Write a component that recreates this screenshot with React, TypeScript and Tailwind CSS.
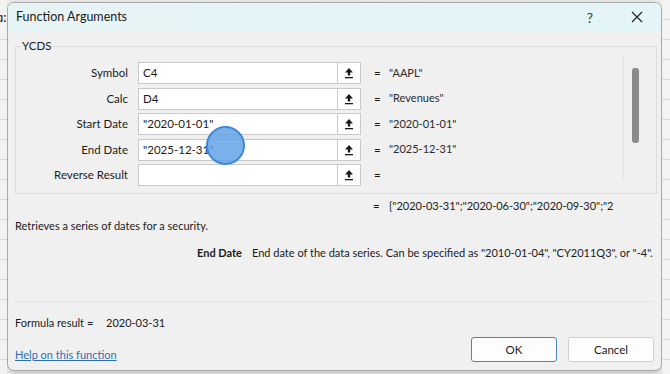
import React from 'react';

const rows = [
  { label: 'Symbol', input: 'C4', value: '"AAPL"' },
  { label: 'Calc', input: 'D4', value: '"Revenues"' },
  { label: 'Start Date', input: '"2020-01-01"', value: '"2020-01-01"' },
  { label: 'End Date', input: '"2025-12-31"', value: '"2025-12-31"' },
  { label: 'Reverse Result', input: '', value: '' },
];

function CollapseIcon() {
  return (
    <svg width="12" height="12" viewBox="0 0 12 12">
      <path d="M6 1 L10 5.5 L7.2 5.5 L7.2 8.5 L4.8 8.5 L4.8 5.5 L2 5.5 Z" fill="#1a1a1a" />
      <rect x="2" y="10" width="8" height="1.3" fill="#1a1a1a" />
    </svg>
  );
}

function SheetStrip({ className }: { className?: string }) {
  return (
    <div className={`flex flex-col bg-[#f3f3f3] ${className ?? ''}`}>
      {Array.from({ length: 19 }).map((_, i) => (
        <div key={i} className="h-[20px] shrink-0 border-b border-[#d8d8d8]" />
      ))}
    </div>
  );
}

export default function App() {
  return (
    <div className="relative flex h-[374px] w-[670px] overflow-hidden bg-[#f3f3f3] font-['Lato',sans-serif] text-[11px] text-[#1b1b1b]">
      <div className="relative w-[7px] shrink-0 overflow-hidden">
        <SheetStrip className="w-full" />
        <span className="absolute left-[-4px] top-[8px] text-[13px] text-[#222]">ɑ:</span>
      </div>

      <div className="mt-[2px] flex h-[369px] w-[655px] shrink-0 flex-col overflow-hidden rounded-[7px] border border-[#a9a9a9] bg-[#f0f0f0] shadow-[0_2px_8px_rgba(0,0,0,0.25)]">
        {/* title bar */}
        <div className="flex h-[28px] shrink-0 items-center bg-[linear-gradient(90deg,#e7f4f6,#e3f5f8)] pl-[8px] pr-[8px]">
          <span className="flex-1 text-[12.5px]">Function Arguments</span>
          <span className="mr-[38px] text-[14px] text-[#333]">?</span>
          <svg width="12" height="12" viewBox="0 0 12 12" className="mr-[10px]">
            <path d="M1 1 L11 11 M11 1 L1 11" stroke="#222" strokeWidth="1.2" />
          </svg>
        </div>

        <div className="flex flex-1 flex-col px-[7px] whitespace-nowrap">
          {/* group box */}
          <fieldset className="mt-[8px] h-[155px] shrink-0 border border-[#dcdcdc] pl-0 pr-0">
            <legend className="ml-[5px] px-[1px] text-[11.5px] leading-[14px]">YCDS</legend>
            <div className="flex">
              <div className="flex w-[345px] flex-col gap-[3.5px] pt-[9px]">
                {rows.map((r) => (
                  <div key={r.label} className="flex h-[22px] items-center text-[11.5px]">
                    <div className="w-[112px] pr-0 text-right">{r.label}</div>
                    <div className="ml-[10px] flex h-[22px] w-[200px] items-center border border-[#c9c9c9] bg-white pl-[4px]">
                      {r.input}
                    </div>
                    <div className="flex h-[22px] w-[23px] items-center justify-center border border-l-0 border-[#c9c9c9] bg-white">
                      <CollapseIcon />
                    </div>
                  </div>
                ))}
              </div>
              <div className="flex w-[262px] flex-col gap-[3.5px] pt-[9px]">
                {rows.map((r) => (
                  <div key={r.label} className="flex h-[22px] items-center">
                    <span className="ml-[13px] w-[15px] text-[11.5px]">=</span>
                    <span className="text-[#2b2b2b]">{r.value}</span>
                  </div>
                ))}
              </div>
              <div className="mt-[3px] h-[125px] w-[33px] border-l border-[#e2e2e2] pl-[8px] pt-[12px]">
                <div className="h-[75px] w-[7px] rounded-[3px] bg-[#8a8a8a]" />
              </div>
            </div>
          </fieldset>

          <div className="mt-[4px] flex h-[16px] shrink-0 items-center">
            <span className="ml-[358px] w-[16px] text-[11.5px]">=</span>
            <span className="w-[224px] overflow-hidden">{'{"2020-03-31";"2020-06-30";"2020-09-30";"2020-12-31"}'}</span>
          </div>

          <div className="mt-[4px] h-[16px] shrink-0 leading-[16px]">Retrieves a series of dates for a security.</div>

          <div className="mt-[11px] flex h-[16px] shrink-0 leading-[16px]">
            <span className="ml-[182px] font-bold">End Date</span>
            <span className="ml-[10px]">End date of the data series. Can be specified as "2010-01-04", "CY2011Q3", or "-4".</span>
          </div>

          <div className="mt-[40px] shrink-0 border-t border-[#e3e3e3]" />

          <div className="mt-[13px] flex h-[16px] shrink-0 leading-[16px]">
            <span className="w-[91px]">Formula result =</span>
            <span>2020-03-31</span>
          </div>

          <div className="mt-[4px] flex shrink-0 items-center">
            <a className="flex-1 pt-[12px] text-[#2c6fb4] underline">Help on this function</a>
            <button className="flex h-[25px] w-[86px] items-center justify-center rounded-[3px] border border-[#4d86b5] bg-[#fdfdfd] text-[11.5px]">OK</button>
            <button className="ml-[11px] flex h-[25px] w-[86px] items-center justify-center rounded-[3px] border border-[#d0d0d0] bg-[#fdfdfd] text-[11.5px]">Cancel</button>
          </div>
        </div>
      </div>

      <div className="w-[8px] shrink-0 overflow-hidden">
        <SheetStrip className="w-full" />
      </div>

      <div className="absolute left-[206px] top-[126px] h-[39px] w-[39px] rounded-full border-2 border-[#3d8ad8] bg-[#64a3e6]/85" />
    </div>
  );
}
